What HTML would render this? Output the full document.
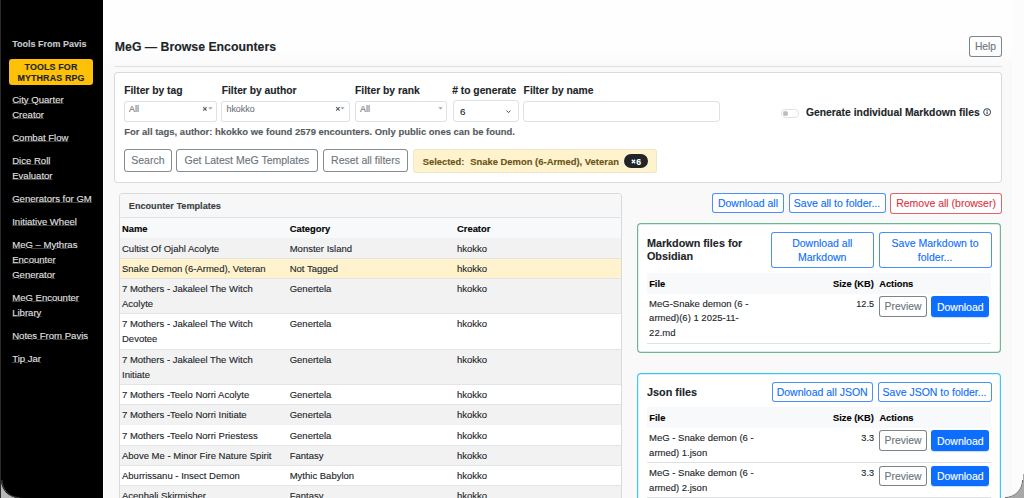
<!DOCTYPE html>
<html><head><meta charset="utf-8"><title>MeG — Browse Encounters</title>
<style>
html,body{margin:0;padding:0;width:1024px;height:498px;overflow:hidden;background:#f9f9fa;}
body{position:relative;font-family:"Liberation Sans", sans-serif;}
.t{position:absolute;white-space:nowrap;-webkit-text-stroke:0.12px currentColor;}
.b{position:absolute;box-sizing:border-box;}
</style></head><body>
<div class="b" style="left:0px;top:0px;width:1024px;height:498px;background:#f9f9fa;border-radius:0px;"></div>
<div class="b" style="left:1012px;top:0px;width:12px;height:498px;background:#fcfcfc;border-radius:0px;"></div>
<div class="b" style="left:104px;top:0px;width:908px;height:68px;background:linear-gradient(#fefefe 0,#fefefe 50px,#f9f9fa 67px);border-radius:0px;"></div>
<div class="b" style="left:0px;top:0px;width:103px;height:498px;background:#000;border-radius:0px;"></div>
<div class="b" style="left:0px;top:0px;width:1px;height:498px;background:#2b2b2b;border-radius:0px;"></div>
<div class="b" style="left:103px;top:0px;width:1px;height:498px;background:#ffffff;border-radius:0px;"></div>
<div class="t" style="left:12.20px;top:39.80px;font-size:9.0px;line-height:9.0px;font-weight:bold;color:#c6cacd;">Tools From Pavis</div>
<div class="b" style="left:9px;top:59px;width:84px;height:26px;background:#ffc107;border-radius:3px;"></div>
<div class="t" style="left:9.00px;top:63.05px;font-size:8.9px;line-height:8.9px;font-weight:bold;color:#212529;text-align:center;width:84px;letter-spacing:0.15px;">TOOLS FOR</div>
<div class="t" style="left:9.00px;top:73.55px;font-size:8.9px;line-height:8.9px;font-weight:bold;color:#212529;text-align:center;width:84px;letter-spacing:0.15px;">MYTHRAS RPG</div>
<div class="t" style="left:12.20px;top:95.02px;font-size:9.55px;line-height:9.55px;font-weight:normal;color:#e2e2e2;text-decoration:underline;text-decoration-color:rgba(236,238,240,.28);text-underline-offset:0px;">City Quarter</div>
<div class="t" style="left:12.20px;top:110.02px;font-size:9.55px;line-height:9.55px;font-weight:normal;color:#e2e2e2;text-decoration:underline;text-decoration-color:rgba(236,238,240,.28);text-underline-offset:0px;">Creator</div>
<div class="t" style="left:12.20px;top:133.02px;font-size:9.55px;line-height:9.55px;font-weight:normal;color:#e2e2e2;text-decoration:underline;text-decoration-color:rgba(236,238,240,.28);text-underline-offset:0px;">Combat Flow</div>
<div class="t" style="left:12.20px;top:156.02px;font-size:9.55px;line-height:9.55px;font-weight:normal;color:#e2e2e2;text-decoration:underline;text-decoration-color:rgba(236,238,240,.28);text-underline-offset:0px;">Dice Roll</div>
<div class="t" style="left:12.20px;top:171.02px;font-size:9.55px;line-height:9.55px;font-weight:normal;color:#e2e2e2;text-decoration:underline;text-decoration-color:rgba(236,238,240,.28);text-underline-offset:0px;">Evaluator</div>
<div class="t" style="left:12.20px;top:194.02px;font-size:9.55px;line-height:9.55px;font-weight:normal;color:#e2e2e2;text-decoration:underline;text-decoration-color:rgba(236,238,240,.28);text-underline-offset:0px;">Generators for GM</div>
<div class="t" style="left:12.20px;top:217.02px;font-size:9.55px;line-height:9.55px;font-weight:normal;color:#e2e2e2;text-decoration:underline;text-decoration-color:rgba(236,238,240,.28);text-underline-offset:0px;">Initiative Wheel</div>
<div class="t" style="left:12.20px;top:239.52px;font-size:9.55px;line-height:9.55px;font-weight:normal;color:#e2e2e2;text-decoration:underline;text-decoration-color:rgba(236,238,240,.28);text-underline-offset:0px;">MeG – Mythras</div>
<div class="t" style="left:12.20px;top:254.53px;font-size:9.55px;line-height:9.55px;font-weight:normal;color:#e2e2e2;text-decoration:underline;text-decoration-color:rgba(236,238,240,.28);text-underline-offset:0px;">Encounter</div>
<div class="t" style="left:12.20px;top:269.53px;font-size:9.55px;line-height:9.55px;font-weight:normal;color:#e2e2e2;text-decoration:underline;text-decoration-color:rgba(236,238,240,.28);text-underline-offset:0px;">Generator</div>
<div class="t" style="left:12.20px;top:292.53px;font-size:9.55px;line-height:9.55px;font-weight:normal;color:#e2e2e2;text-decoration:underline;text-decoration-color:rgba(236,238,240,.28);text-underline-offset:0px;">MeG Encounter</div>
<div class="t" style="left:12.20px;top:307.53px;font-size:9.55px;line-height:9.55px;font-weight:normal;color:#e2e2e2;text-decoration:underline;text-decoration-color:rgba(236,238,240,.28);text-underline-offset:0px;">Library</div>
<div class="t" style="left:12.20px;top:330.53px;font-size:9.55px;line-height:9.55px;font-weight:normal;color:#e2e2e2;text-decoration:underline;text-decoration-color:rgba(236,238,240,.28);text-underline-offset:0px;">Notes From Pavis</div>
<div class="t" style="left:12.20px;top:353.53px;font-size:9.55px;line-height:9.55px;font-weight:normal;color:#e2e2e2;text-decoration:underline;text-decoration-color:rgba(236,238,240,.28);text-underline-offset:0px;">Tip Jar</div>
<div class="t" style="left:114.80px;top:40.85px;font-size:12.3px;line-height:12.3px;font-weight:bold;color:#212529;">MeG — Browse Encounters</div>
<div class="b" style="left:969px;top:36px;width:33px;height:21px;background:transparent;border-radius:3px;box-shadow: inset 0 0 0 1px #7d858c;"></div>
<div class="t" style="left:969.00px;top:42.35px;font-size:10.3px;line-height:10.3px;font-weight:normal;color:#6c757d;text-align:center;width:33px;">Help</div>
<div class="b" style="left:114px;top:65.5px;width:888px;height:1.0px;background:#dfe1e3;border-radius:0px;"></div>
<div class="b" style="left:114px;top:71.5px;width:887.8px;height:111.9px;background:#fff;border-radius:4px;box-shadow: inset 0 0 0 1px #d8dadd;"></div>
<div class="t" style="left:124.20px;top:85.95px;font-size:10.3px;line-height:10.3px;font-weight:bold;color:#212529;">Filter by tag</div>
<div class="t" style="left:221.70px;top:85.95px;font-size:10.3px;line-height:10.3px;font-weight:bold;color:#212529;">Filter by author</div>
<div class="t" style="left:355.00px;top:85.95px;font-size:10.3px;line-height:10.3px;font-weight:bold;color:#212529;">Filter by rank</div>
<div class="t" style="left:452.20px;top:85.65px;font-size:10.3px;line-height:10.3px;font-weight:bold;color:#212529;"># to generate</div>
<div class="t" style="left:523.60px;top:86.25px;font-size:10.3px;line-height:10.3px;font-weight:bold;color:#212529;">Filter by name</div>
<div class="b" style="left:124px;top:101px;width:93px;height:20.5px;background:#fff;border-radius:3px;box-shadow: inset 0 0 0 1px #dee2e6;"></div>
<div class="t" style="left:129.00px;top:105.45px;font-size:8.9px;line-height:8.9px;font-weight:normal;color:#6f767d;">All</div>
<div class="b" style="left:221px;top:101px;width:128.5px;height:20.5px;background:#fff;border-radius:3px;box-shadow: inset 0 0 0 1px #dee2e6;"></div>
<div class="t" style="left:226.50px;top:105.45px;font-size:8.9px;line-height:8.9px;font-weight:normal;color:#6f767d;">hkokko</div>
<div class="b" style="left:355px;top:101px;width:92px;height:20.5px;background:#fff;border-radius:3px;box-shadow: inset 0 0 0 1px #dee2e6;"></div>
<div class="t" style="left:360.00px;top:105.45px;font-size:8.9px;line-height:8.9px;font-weight:normal;color:#6f767d;">All</div>
<svg class="b" style="left:201.79999999999998px;top:106.2px" width="6" height="6" viewBox="0 0 6 6"><path d="M1.2 1.2L4.6 4.6M4.6 1.2L1.2 4.6" stroke="#5a636b" stroke-width="1.2"/></svg>
<svg class="b" style="left:207.6px;top:107px" width="5" height="3" viewBox="0 0 5 3"><path d="M0.3 0.3H4.7L2.5 2.6Z" fill="#9aa0a6"/></svg>
<svg class="b" style="left:334.59999999999997px;top:106.2px" width="6" height="6" viewBox="0 0 6 6"><path d="M1.2 1.2L4.6 4.6M4.6 1.2L1.2 4.6" stroke="#5a636b" stroke-width="1.2"/></svg>
<svg class="b" style="left:340.4px;top:107px" width="5" height="3" viewBox="0 0 5 3"><path d="M0.3 0.3H4.7L2.5 2.6Z" fill="#9aa0a6"/></svg>
<svg class="b" style="left:438px;top:107px" width="5" height="3" viewBox="0 0 5 3"><path d="M0.3 0.3H4.7L2.5 2.6Z" fill="#9aa0a6"/></svg>
<div class="b" style="left:452.5px;top:100.2px;width:66.5px;height:21.599999999999994px;background:#fff;border-radius:4px;box-shadow: inset 0 0 0 1px #dee2e6;"></div>
<div class="t" style="left:459.90px;top:106.80px;font-size:9.8px;line-height:9.8px;font-weight:normal;color:#212529;">6</div>
<svg class="b" style="left:505.5px;top:109.5px" width="5" height="3.5" viewBox="0 0 5 3.5"><path d="M0.6 0.6L2.5 2.6L4.4 0.6" stroke="#3a3f44" stroke-width="0.9" fill="none"/></svg>
<div class="b" style="left:523px;top:101px;width:197px;height:20.5px;background:#fff;border-radius:4px;box-shadow: inset 0 0 0 1px #dee2e6;"></div>
<div class="b" style="left:781px;top:108.5px;width:17.5px;height:9.0px;background:#fff;border-radius:4.5px;box-shadow: inset 0 0 0 1px #dfe2e5;"></div>
<div class="b" style="left:782.8px;top:110.6px;width:5px;height:5px;border-radius:50%;background:#bdbdbd"></div>
<div class="t" style="left:805.90px;top:107.62px;font-size:10.36px;line-height:10.36px;font-weight:bold;color:#212529;">Generate individual Markdown files</div>
<svg class="b" style="left:983px;top:107.8px" width="8.2" height="8.2" viewBox="0 0 8.2 8.2"><circle cx="4.1" cy="4.1" r="3.45" stroke="#2e3338" stroke-width="0.95" fill="none"/><path d="M4.1 3.5V6.1" stroke="#2e3338" stroke-width="1"/><circle cx="4.1" cy="2.4" r="0.55" fill="#2e3338"/></svg>
<div class="t" style="left:124.20px;top:127.37px;font-size:9.46px;line-height:9.46px;font-weight:bold;color:#555b61;">For all tags, author: hkokko we found 2579 encounters. Only public ones can be found.</div>
<div class="b" style="left:124px;top:148.5px;width:47.80000000000001px;height:23.099999999999994px;background:#fff;border-radius:3.5px;box-shadow: inset 0 0 0 1px #858c93;"></div>
<div class="t" style="left:124.00px;top:155.05px;font-size:10.5px;line-height:10.5px;font-weight:normal;color:#6c757d;text-align:center;width:47.80000000000001px;">Search</div>
<div class="b" style="left:176.1px;top:148.5px;width:141.70000000000002px;height:23.099999999999994px;background:#fff;border-radius:3.5px;box-shadow: inset 0 0 0 1px #858c93;"></div>
<div class="t" style="left:176.10px;top:155.05px;font-size:10.5px;line-height:10.5px;font-weight:normal;color:#6c757d;text-align:center;width:141.70000000000002px;">Get Latest MeG Templates</div>
<div class="b" style="left:323px;top:148.5px;width:85px;height:23.099999999999994px;background:#fff;border-radius:3.5px;box-shadow: inset 0 0 0 1px #858c93;"></div>
<div class="t" style="left:323.00px;top:155.05px;font-size:10.5px;line-height:10.5px;font-weight:normal;color:#6c757d;text-align:center;width:85px;">Reset all filters</div>
<div class="b" style="left:413.4px;top:148.8px;width:244.0px;height:24.0px;background:#fff3cd;border-radius:3.5px;box-shadow: inset 0 0 0 1px #efe5c9;"></div>
<div class="t" style="left:422.80px;top:157.62px;font-size:9.35px;line-height:9.35px;font-weight:bold;color:#6a5416;">Selected:</div>
<div class="t" style="left:470.20px;top:157.08px;font-size:9.43px;line-height:9.43px;font-weight:bold;color:#6a5416;">Snake Demon (6-Armed), Veteran</div>
<div class="b" style="left:624.2px;top:153.7px;width:23.59999999999991px;height:14.800000000000011px;background:#212529;border-radius:7.4px;"></div>
<div class="t" style="left:636.30px;top:157.60px;font-size:8.6px;line-height:8.6px;font-weight:bold;color:#fff;">6</div>
<svg class="b" style="left:630.5px;top:159.3px" width="5" height="5" viewBox="0 0 5 5"><path d="M0.8 0.8L4.2 4.2M4.2 0.8L0.8 4.2" stroke="#fff" stroke-width="1.25"/></svg>
<div class="b" style="left:118.7px;top:193px;width:503.8px;height:317px;background:#fff;border-radius:4px;box-shadow: inset 0 0 0 1px #d8dadd;"></div>
<div class="b" style="left:119.7px;top:194px;width:501.8px;height:23px;background:#f7f7f7;border-radius:3px;"></div>
<div class="b" style="left:118.7px;top:216.5px;width:503.8px;height:1.0px;background:#dee2e6;border-radius:0px;"></div>
<div class="t" style="left:128.80px;top:202.03px;font-size:9.14px;line-height:9.14px;font-weight:bold;color:#3a3f44;">Encounter Templates</div>
<div class="b" style="left:119.7px;top:217.5px;width:501.8px;height:20.80000000000001px;background:#f8f9fa;border-radius:0px;"></div>
<div class="t" style="left:122.00px;top:224.10px;font-size:9.4px;line-height:9.4px;font-weight:bold;color:#000;">Name</div>
<div class="t" style="left:289.70px;top:224.10px;font-size:9.4px;line-height:9.4px;font-weight:bold;color:#000;">Category</div>
<div class="t" style="left:457.00px;top:224.10px;font-size:9.4px;line-height:9.4px;font-weight:bold;color:#000;">Creator</div>
<div class="b" style="left:119.7px;top:238.3px;width:501.8px;height:20.19999999999999px;background:#f2f2f2;border-radius:0px;"></div>
<div class="b" style="left:119.7px;top:257.7px;width:501.8px;height:1.0px;background:#e3e4e6;border-radius:0px;"></div>
<div class="t" style="left:122.00px;top:241.60px;font-size:9.5px;line-height:14.8px;font-weight:normal;color:#212529;">Cultist Of Ojahl Acolyte</div>
<div class="t" style="left:289.70px;top:241.60px;font-size:9.5px;line-height:14.8px;font-weight:normal;color:#212529;">Monster Island</div>
<div class="t" style="left:457.00px;top:241.60px;font-size:9.5px;line-height:14.8px;font-weight:normal;color:#212529;">hkokko</div>
<div class="b" style="left:119.7px;top:258.5px;width:501.8px;height:20.19999999999999px;background:#fff3cd;border-radius:0px;"></div>
<div class="b" style="left:119.7px;top:277.9px;width:501.8px;height:1.0px;background:#e3e4e6;border-radius:0px;"></div>
<div class="t" style="left:122.00px;top:261.80px;font-size:9.5px;line-height:14.8px;font-weight:normal;color:#212529;">Snake Demon (6-Armed), Veteran</div>
<div class="t" style="left:289.70px;top:261.80px;font-size:9.5px;line-height:14.8px;font-weight:normal;color:#212529;">Not Tagged</div>
<div class="t" style="left:457.00px;top:261.80px;font-size:9.5px;line-height:14.8px;font-weight:normal;color:#212529;">hkokko</div>
<div class="b" style="left:119.7px;top:278.7px;width:501.8px;height:35.39999999999998px;background:#f2f2f2;border-radius:0px;"></div>
<div class="b" style="left:119.7px;top:313.29999999999995px;width:501.8px;height:1.0px;background:#e3e4e6;border-radius:0px;"></div>
<div class="t" style="left:122.00px;top:282.00px;font-size:9.5px;line-height:14.8px;font-weight:normal;color:#212529;">7 Mothers - Jakaleel The Witch<br>Acolyte</div>
<div class="t" style="left:289.70px;top:282.00px;font-size:9.5px;line-height:14.8px;font-weight:normal;color:#212529;">Genertela</div>
<div class="t" style="left:457.00px;top:282.00px;font-size:9.5px;line-height:14.8px;font-weight:normal;color:#212529;">hkokko</div>
<div class="b" style="left:119.7px;top:314.09999999999997px;width:501.8px;height:35.39999999999998px;background:#fff;border-radius:0px;"></div>
<div class="b" style="left:119.7px;top:348.69999999999993px;width:501.8px;height:1.0px;background:#e3e4e6;border-radius:0px;"></div>
<div class="t" style="left:122.00px;top:317.40px;font-size:9.5px;line-height:14.8px;font-weight:normal;color:#212529;">7 Mothers - Jakaleel The Witch<br>Devotee</div>
<div class="t" style="left:289.70px;top:317.40px;font-size:9.5px;line-height:14.8px;font-weight:normal;color:#212529;">Genertela</div>
<div class="t" style="left:457.00px;top:317.40px;font-size:9.5px;line-height:14.8px;font-weight:normal;color:#212529;">hkokko</div>
<div class="b" style="left:119.7px;top:349.49999999999994px;width:501.8px;height:35.39999999999998px;background:#f2f2f2;border-radius:0px;"></div>
<div class="b" style="left:119.7px;top:384.0999999999999px;width:501.8px;height:1.0px;background:#e3e4e6;border-radius:0px;"></div>
<div class="t" style="left:122.00px;top:352.80px;font-size:9.5px;line-height:14.8px;font-weight:normal;color:#212529;">7 Mothers - Jakaleel The Witch<br>Initiate</div>
<div class="t" style="left:289.70px;top:352.80px;font-size:9.5px;line-height:14.8px;font-weight:normal;color:#212529;">Genertela</div>
<div class="t" style="left:457.00px;top:352.80px;font-size:9.5px;line-height:14.8px;font-weight:normal;color:#212529;">hkokko</div>
<div class="b" style="left:119.7px;top:384.8999999999999px;width:501.8px;height:20.19999999999999px;background:#fff;border-radius:0px;"></div>
<div class="b" style="left:119.7px;top:404.2999999999999px;width:501.8px;height:1.0px;background:#e3e4e6;border-radius:0px;"></div>
<div class="t" style="left:122.00px;top:388.20px;font-size:9.5px;line-height:14.8px;font-weight:normal;color:#212529;">7 Mothers -Teelo Norri Acolyte</div>
<div class="t" style="left:289.70px;top:388.20px;font-size:9.5px;line-height:14.8px;font-weight:normal;color:#212529;">Genertela</div>
<div class="t" style="left:457.00px;top:388.20px;font-size:9.5px;line-height:14.8px;font-weight:normal;color:#212529;">hkokko</div>
<div class="b" style="left:119.7px;top:405.0999999999999px;width:501.8px;height:20.19999999999999px;background:#f2f2f2;border-radius:0px;"></div>
<div class="b" style="left:119.7px;top:424.4999999999999px;width:501.8px;height:1.0px;background:#e3e4e6;border-radius:0px;"></div>
<div class="t" style="left:122.00px;top:408.40px;font-size:9.5px;line-height:14.8px;font-weight:normal;color:#212529;">7 Mothers -Teelo Norri Initiate</div>
<div class="t" style="left:289.70px;top:408.40px;font-size:9.5px;line-height:14.8px;font-weight:normal;color:#212529;">Genertela</div>
<div class="t" style="left:457.00px;top:408.40px;font-size:9.5px;line-height:14.8px;font-weight:normal;color:#212529;">hkokko</div>
<div class="b" style="left:119.7px;top:425.2999999999999px;width:501.8px;height:20.19999999999999px;background:#fff;border-radius:0px;"></div>
<div class="b" style="left:119.7px;top:444.6999999999999px;width:501.8px;height:1.0px;background:#e3e4e6;border-radius:0px;"></div>
<div class="t" style="left:122.00px;top:428.60px;font-size:9.5px;line-height:14.8px;font-weight:normal;color:#212529;">7 Mothers -Teelo Norri Priestess</div>
<div class="t" style="left:289.70px;top:428.60px;font-size:9.5px;line-height:14.8px;font-weight:normal;color:#212529;">Genertela</div>
<div class="t" style="left:457.00px;top:428.60px;font-size:9.5px;line-height:14.8px;font-weight:normal;color:#212529;">hkokko</div>
<div class="b" style="left:119.7px;top:445.4999999999999px;width:501.8px;height:20.19999999999999px;background:#f2f2f2;border-radius:0px;"></div>
<div class="b" style="left:119.7px;top:464.89999999999986px;width:501.8px;height:1.0px;background:#e3e4e6;border-radius:0px;"></div>
<div class="t" style="left:122.00px;top:448.80px;font-size:9.5px;line-height:14.8px;font-weight:normal;color:#212529;">Above Me - Minor Fire Nature Spirit</div>
<div class="t" style="left:289.70px;top:448.80px;font-size:9.5px;line-height:14.8px;font-weight:normal;color:#212529;">Fantasy</div>
<div class="t" style="left:457.00px;top:448.80px;font-size:9.5px;line-height:14.8px;font-weight:normal;color:#212529;">hkokko</div>
<div class="b" style="left:119.7px;top:465.6999999999999px;width:501.8px;height:20.19999999999999px;background:#fff;border-radius:0px;"></div>
<div class="b" style="left:119.7px;top:485.09999999999985px;width:501.8px;height:1.0px;background:#e3e4e6;border-radius:0px;"></div>
<div class="t" style="left:122.00px;top:469.00px;font-size:9.5px;line-height:14.8px;font-weight:normal;color:#212529;">Aburrissanu - Insect Demon</div>
<div class="t" style="left:289.70px;top:469.00px;font-size:9.5px;line-height:14.8px;font-weight:normal;color:#212529;">Mythic Babylon</div>
<div class="t" style="left:457.00px;top:469.00px;font-size:9.5px;line-height:14.8px;font-weight:normal;color:#212529;">hkokko</div>
<div class="b" style="left:119.7px;top:485.89999999999986px;width:501.8px;height:20.19999999999999px;background:#f2f2f2;border-radius:0px;"></div>
<div class="b" style="left:119.7px;top:505.29999999999984px;width:501.8px;height:1.0px;background:#e3e4e6;border-radius:0px;"></div>
<div class="t" style="left:122.00px;top:489.20px;font-size:9.5px;line-height:14.8px;font-weight:normal;color:#212529;">Acephali Skirmisher</div>
<div class="t" style="left:289.70px;top:489.20px;font-size:9.5px;line-height:14.8px;font-weight:normal;color:#212529;">Fantasy</div>
<div class="t" style="left:457.00px;top:489.20px;font-size:9.5px;line-height:14.8px;font-weight:normal;color:#212529;">hkokko</div>
<div class="b" style="left:712.3px;top:192.8px;width:71.30000000000007px;height:20.5px;background:#fff;border-radius:3px;box-shadow: inset 0 0 0 1px #4a90fd;"></div>
<div class="t" style="left:712.30px;top:198.20px;font-size:10.5px;line-height:10.5px;font-weight:normal;color:#0d6efd;text-align:center;width:71.30000000000007px;">Download all</div>
<div class="b" style="left:788.5px;top:192.8px;width:97.0px;height:20.5px;background:#fff;border-radius:3px;box-shadow: inset 0 0 0 1px #4a90fd;"></div>
<div class="t" style="left:788.50px;top:198.20px;font-size:10.5px;line-height:10.5px;font-weight:normal;color:#0d6efd;text-align:center;width:97.0px;">Save all to folder...</div>
<div class="b" style="left:890.3px;top:192.6px;width:111.5px;height:21.0px;background:#fff;border-radius:3px;box-shadow: inset 0 0 0 1px #e3636f;"></div>
<div class="t" style="left:890.30px;top:198.25px;font-size:10.5px;line-height:10.5px;font-weight:normal;color:#dc3545;text-align:center;width:111.5px;">Remove all (browser)</div>
<div class="b" style="left:637.3px;top:222.8px;width:364.20000000000005px;height:130.5px;background:#fff;border-radius:4px;box-shadow: inset 0 0 0 1px #5fae87;box-shadow: inset 0 0 0 1.2px #6db793;"></div>
<div class="t" style="left:646.90px;top:236.85px;font-size:10.8px;line-height:13.3px;font-weight:bold;color:#212529;">Markdown files for<br>Obsidian</div>
<div class="b" style="left:770.8px;top:232.2px;width:102.90000000000009px;height:35.80000000000001px;background:#fff;border-radius:3px;box-shadow: inset 0 0 0 1px #4a90fd;"></div>
<div class="t" style="left:770.80px;top:236.00px;font-size:10.5px;line-height:14.4px;font-weight:normal;color:#0d6efd;text-align:center;width:102.90000000000009px;">Download all<br>Markdown</div>
<div class="b" style="left:878.5px;top:232.2px;width:113.20000000000005px;height:35.80000000000001px;background:#fff;border-radius:3px;box-shadow: inset 0 0 0 1px #4a90fd;"></div>
<div class="t" style="left:878.50px;top:236.00px;font-size:10.5px;line-height:14.4px;font-weight:normal;color:#0d6efd;text-align:center;width:113.20000000000005px;">Save Markdown to<br>folder...</div>
<div class="b" style="left:646.9px;top:272.5px;width:344.30000000000007px;height:21.30000000000001px;background:#f8f9fa;border-radius:0px;"></div>
<div class="t" style="left:649.20px;top:279.65px;font-size:9.3px;line-height:9.3px;font-weight:bold;color:#000;">File</div>
<div class="t" style="left:833.00px;top:279.65px;font-size:9.3px;line-height:9.3px;font-weight:bold;color:#000;">Size (KB)</div>
<div class="t" style="left:879.20px;top:279.65px;font-size:9.3px;line-height:9.3px;font-weight:bold;color:#000;">Actions</div>
<div class="t" style="left:649.10px;top:296.72px;font-size:9.5px;line-height:14.75px;font-weight:normal;color:#212529;">MeG-Snake demon (6 -<br>armed)(6) 1 2025-11-<br>22.md</div>
<div class="t" style="left:833.00px;top:299.85px;font-size:9.1px;line-height:9.1px;font-weight:normal;color:#212529;text-align:right;width:41px;">12.5</div>
<div class="b" style="left:879.4px;top:296.2px;width:47.30000000000007px;height:20.400000000000034px;background:#fff;border-radius:3px;box-shadow: inset 0 0 0 1px #7d858c;"></div>
<div class="t" style="left:879.40px;top:302.10px;font-size:10.4px;line-height:10.4px;font-weight:normal;color:#6c757d;text-align:center;width:47.3px;">Preview</div>
<div class="b" style="left:931.4px;top:296.2px;width:57.80000000000007px;height:20.400000000000034px;background:#0d6efd;border-radius:3px;box-shadow:0 0.5px 1px rgba(13,110,253,.25);"></div>
<div class="t" style="left:931.40px;top:301.55px;font-size:10.5px;line-height:10.5px;font-weight:normal;color:#fff;text-align:center;width:57.8px;">Download</div>
<div class="b" style="left:646.9px;top:343px;width:344.30000000000007px;height:1px;background:#dee2e6;border-radius:0px;"></div>
<div class="b" style="left:637.3px;top:372.5px;width:364.20000000000005px;height:147.5px;background:#fff;border-radius:4px;box-shadow: inset 0 0 0 1px #0dcaf0;box-shadow: inset 0 0 0 1.2px #3fc8ef;"></div>
<div class="t" style="left:647.00px;top:386.98px;font-size:10.84px;line-height:10.84px;font-weight:bold;color:#212529;">Json files</div>
<div class="b" style="left:771.6px;top:382px;width:101.19999999999993px;height:20.399999999999977px;background:#fff;border-radius:3px;box-shadow: inset 0 0 0 1px #4a90fd;"></div>
<div class="t" style="left:771.60px;top:387.35px;font-size:10.5px;line-height:10.5px;font-weight:normal;color:#0d6efd;text-align:center;width:101.19999999999993px;">Download all JSON</div>
<div class="b" style="left:877.5px;top:382px;width:114.10000000000002px;height:20.399999999999977px;background:#fff;border-radius:3px;box-shadow: inset 0 0 0 1px #4a90fd;"></div>
<div class="t" style="left:877.50px;top:387.35px;font-size:10.5px;line-height:10.5px;font-weight:normal;color:#0d6efd;text-align:center;width:114.10000000000002px;">Save JSON to folder...</div>
<div class="b" style="left:646.9px;top:407px;width:344.30000000000007px;height:20.80000000000001px;background:#f8f9fa;border-radius:0px;"></div>
<div class="t" style="left:649.30px;top:413.65px;font-size:9.3px;line-height:9.3px;font-weight:bold;color:#000;">File</div>
<div class="t" style="left:833.00px;top:413.65px;font-size:9.3px;line-height:9.3px;font-weight:bold;color:#000;">Size (KB)</div>
<div class="t" style="left:879.40px;top:413.65px;font-size:9.3px;line-height:9.3px;font-weight:bold;color:#000;">Actions</div>
<div class="t" style="left:649.10px;top:430.93px;font-size:9.5px;line-height:14.75px;font-weight:normal;color:#212529;">MeG - Snake demon (6 -<br>armed) 1.json</div>
<div class="t" style="left:833.00px;top:434.25px;font-size:9.1px;line-height:9.1px;font-weight:normal;color:#212529;text-align:right;width:41px;">3.3</div>
<div class="b" style="left:879.4px;top:430.1px;width:47.30000000000007px;height:21.299999999999955px;background:#fff;border-radius:3px;box-shadow: inset 0 0 0 1px #7d858c;"></div>
<div class="t" style="left:879.40px;top:436.45px;font-size:10.4px;line-height:10.4px;font-weight:normal;color:#6c757d;text-align:center;width:47.3px;">Preview</div>
<div class="b" style="left:931.4px;top:430.1px;width:57.80000000000007px;height:21.299999999999955px;background:#0d6efd;border-radius:3px;box-shadow:0 0.5px 1px rgba(13,110,253,.25);"></div>
<div class="t" style="left:931.40px;top:435.90px;font-size:10.5px;line-height:10.5px;font-weight:normal;color:#fff;text-align:center;width:57.8px;">Download</div>
<div class="b" style="left:646.9px;top:462.3px;width:344.30000000000007px;height:1.0px;background:#dee2e6;border-radius:0px;"></div>
<div class="t" style="left:649.10px;top:466.12px;font-size:9.5px;line-height:14.75px;font-weight:normal;color:#212529;">MeG - Snake demon (6 -<br>armed) 2.json</div>
<div class="t" style="left:833.00px;top:469.45px;font-size:9.1px;line-height:9.1px;font-weight:normal;color:#212529;text-align:right;width:41px;">3.3</div>
<div class="b" style="left:879.4px;top:466px;width:47.30000000000007px;height:20.30000000000001px;background:#fff;border-radius:3px;box-shadow: inset 0 0 0 1px #7d858c;"></div>
<div class="t" style="left:879.40px;top:471.85px;font-size:10.4px;line-height:10.4px;font-weight:normal;color:#6c757d;text-align:center;width:47.3px;">Preview</div>
<div class="b" style="left:931.4px;top:466px;width:57.80000000000007px;height:20.30000000000001px;background:#0d6efd;border-radius:3px;box-shadow:0 0.5px 1px rgba(13,110,253,.25);"></div>
<div class="t" style="left:931.40px;top:471.30px;font-size:10.5px;line-height:10.5px;font-weight:normal;color:#fff;text-align:center;width:57.8px;">Download</div>
<div class="b" style="left:646.9px;top:497px;width:344.30000000000007px;height:1px;background:#dee2e6;border-radius:0px;"></div>
<svg class="b" style="left:0;top:474px" width="24" height="24" viewBox="0 0 24 24"><path d="M0 0V24H24V24H19.5A18 18 0 0 1 1 6V0Z" fill="#b8b8b8"/><path d="M19.5 23.6A17.6 17.6 0 0 1 1.9 6" stroke="#4a4a4a" stroke-width="0.9" fill="none"/><rect x="0" y="0" width="1" height="24" fill="#2b2b2b"/></svg>
<svg class="b" style="left:1000px;top:474px" width="24" height="24" viewBox="0 0 24 24"><path d="M24 0V24H0V24H5A18 18 0 0 0 23 6V0Z" fill="#a8a8a8"/><path d="M5 23.6A17.6 17.6 0 0 0 22.6 6" stroke="#5a5a5a" stroke-width="0.9" fill="none"/></svg>
</body></html>
